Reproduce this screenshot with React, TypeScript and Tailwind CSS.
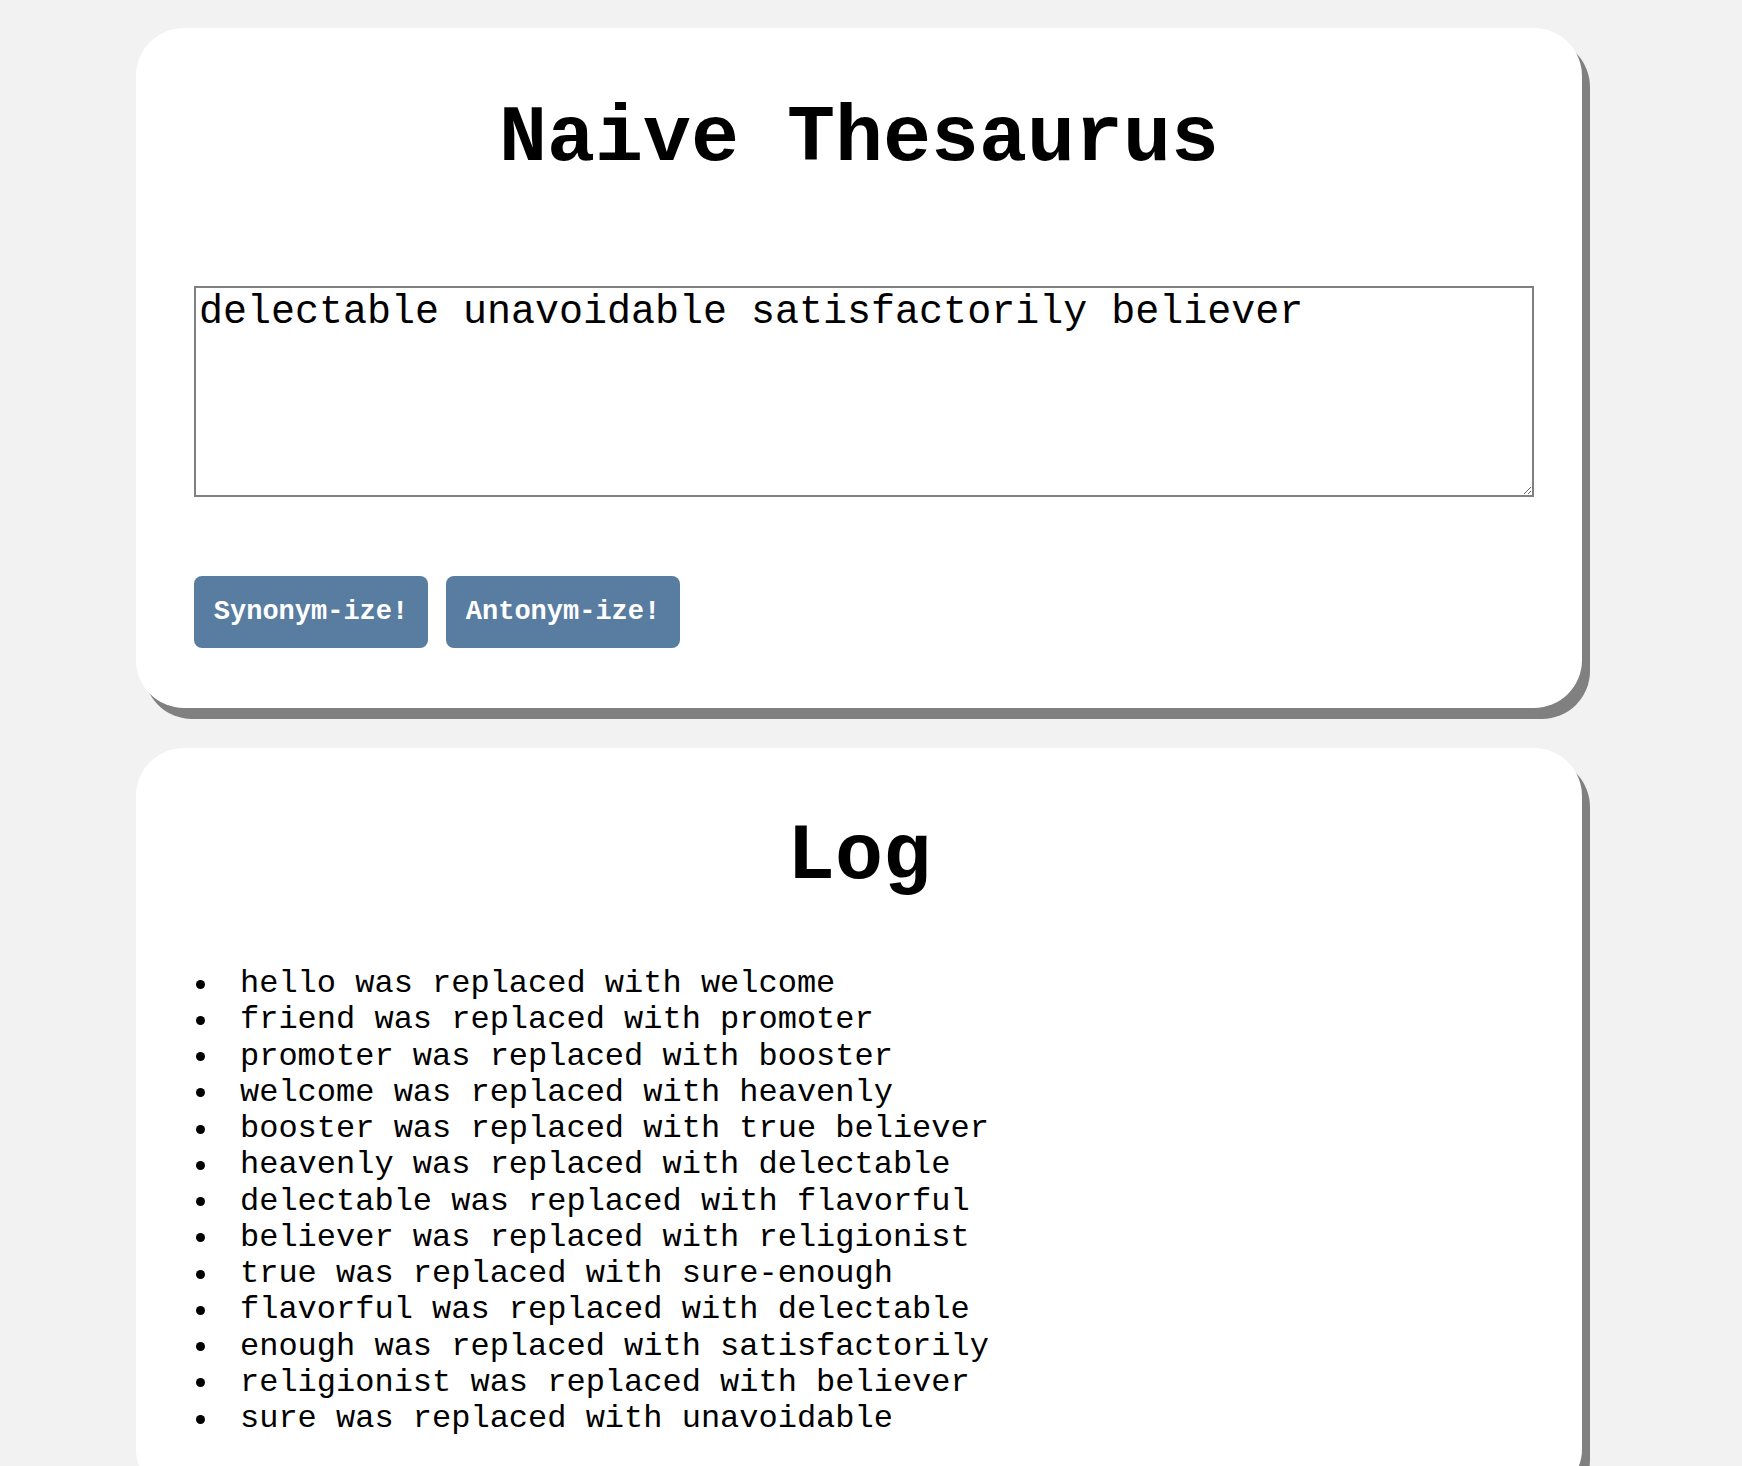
const log = [
  'hello was replaced with welcome',
  'friend was replaced with promoter',
  'promoter was replaced with booster',
  'welcome was replaced with heavenly',
  'booster was replaced with true believer',
  'heavenly was replaced with delectable',
  'delectable was replaced with flavorful',
  'believer was replaced with religionist',
  'true was replaced with sure-enough',
  'flavorful was replaced with delectable',
  'enough was replaced with satisfactorily',
  'religionist was replaced with believer',
  'sure was replaced with unavoidable',
]

const mono = "font-['Liberation_Mono','Courier_New',monospace]"

export default function App() {
  return (
    <div className={`min-h-screen bg-[#f2f2f2] pt-[28px] pb-[40px] ${mono}`}>
      {/* Thesaurus card */}
      <div className="ml-[136px] w-[1446px] rounded-[48px] bg-white px-[58px] pt-[65px] pb-[60px] shadow-[8px_11px_0_#808080]">
        <h1 className="m-0 text-center text-[80px] font-bold leading-[91px] text-black">Naive Thesaurus</h1>
        <textarea
          className="mt-[102px] block h-[211px] w-[1340px] border-2 border-[#808080] px-[3px] py-[2px] text-[40px] leading-[45px] text-black outline-none"
          defaultValue="delectable unavoidable satisfactorily believer"
        />
        <div className="mt-[79px] flex gap-[18px]">
          <button className="h-[72px] w-[234px] rounded-[8px] bg-[#587da0] text-[27px] font-bold text-white">
            Synonym-ize!
          </button>
          <button className="h-[72px] w-[234px] rounded-[8px] bg-[#587da0] text-[27px] font-bold text-white">
            Antonym-ize!
          </button>
        </div>
      </div>

      {/* Log card */}
      <div className="ml-[136px] mt-[40px] w-[1446px] rounded-[48px] bg-white px-[58px] pt-[63px] pb-[60px] shadow-[8px_11px_0_#808080]">
        <h2 className="m-0 text-center text-[80px] font-bold leading-[91px] text-black">Log</h2>
        <ul className="mt-[64px] text-[32px] leading-[36.25px] text-black">
          {log.map((line, i) => (
            <li key={i} className="flex items-center">
              <span className="ml-[2px] mr-[35px] h-[9px] w-[9px] shrink-0 rounded-full bg-black" />
              <span>{line}</span>
            </li>
          ))}
        </ul>
      </div>
    </div>
  )
}
